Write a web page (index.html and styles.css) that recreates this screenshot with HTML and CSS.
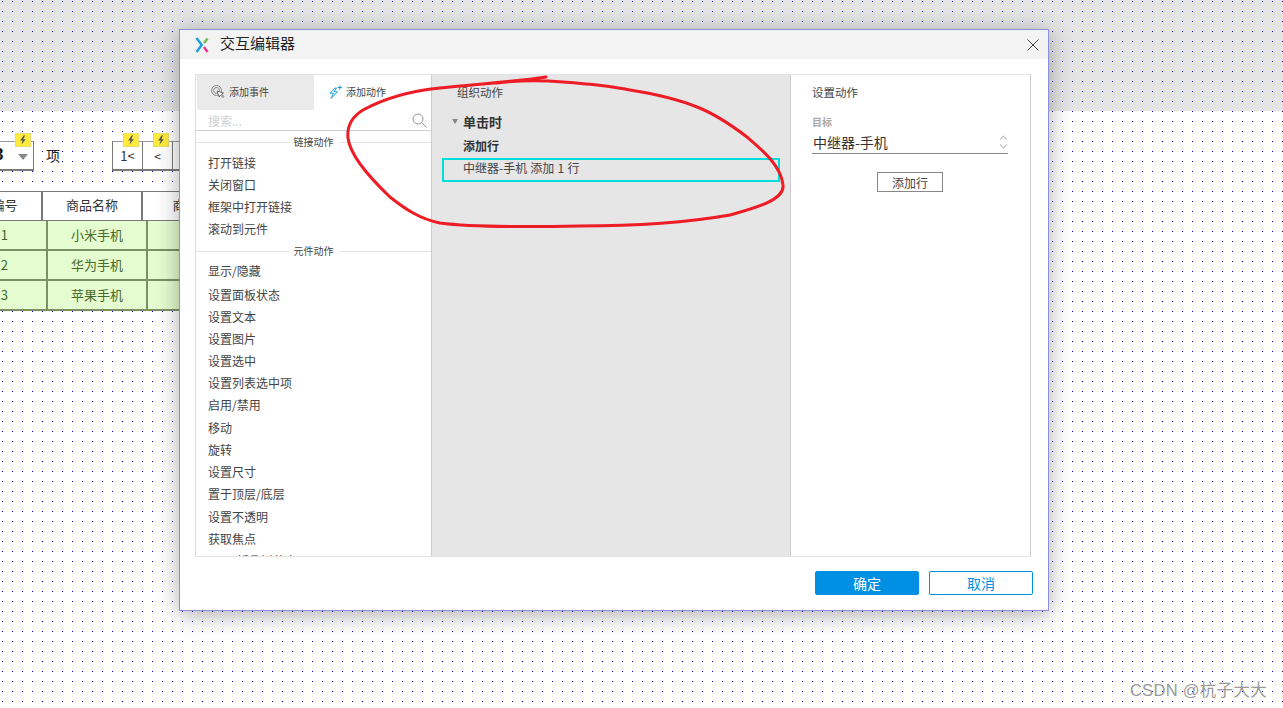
FILE: index.html
```html
<!DOCTYPE html>
<html lang="zh-CN">
<head>
<meta charset="utf-8">
<title>交互编辑器</title>
<link rel="stylesheet" href="styles.css">
</head>
<body>
<main class="canvas">
  <div class="band"></div>

  <div class="widget pager-select"><b class="count">3</b><i class="caret"></i></div>
  <span class="bolt bolt-a"><svg viewBox="0 0 10 12"><path d="M6 0 1.500 6.500h3L3 12l5.500-7h-3L7.500 0z"/></svg></span>
  <span class="widget-label">项</span>
  <div class="widget pager-btn btn-first">1&lt;</div>
  <div class="widget pager-btn btn-prev">&lt;</div>
  <div class="widget pager-btn btn-next"></div>
  <span class="bolt bolt-b"><svg viewBox="0 0 10 12"><path d="M6 0 1.500 6.500h3L3 12l5.500-7h-3L7.500 0z"/></svg></span>
  <span class="bolt bolt-c"><svg viewBox="0 0 10 12"><path d="M6 0 1.500 6.500h3L3 12l5.500-7h-3L7.500 0z"/></svg></span>

  <div class="grid-table">
    <div class="thead">
      <span class="th c-id">编号</span><span class="th c-name">商品名称</span><span class="th c-more">商</span>
    </div>
    <div class="trow"><span class="td d-id">1</span><span class="td d-name">小米手机</span><span class="td d-more"></span></div>
    <div class="trow"><span class="td d-id">2</span><span class="td d-name">华为手机</span><span class="td d-more"></span></div>
    <div class="trow"><span class="td d-id">3</span><span class="td d-name">苹果手机</span><span class="td d-more"></span></div>
  </div>

  <section class="dialog">
    <header class="dialog-head">
      <svg class="logo" viewBox="0 0 14 16" fill="none" stroke-width="2.400">
        <path d="M1.500 1 6.800 8 1.500 15" stroke="#1b9fdc"/>
        <path d="M12.500 1.500 9 6" stroke="#6dbb45"/>
        <path d="M9 10 12.500 15" stroke="#e6358f"/>
      </svg>
      <h1 class="dialog-title">交互编辑器</h1>
      <svg class="close" viewBox="0 0 12 12"><path d="M.5.500l11 11M11.500.500l-11 11" stroke="#444" fill="none"/></svg>
    </header>

    <div class="dialog-body">
      <div class="col col-left">
        <div class="tabs">
          <div class="tab tab-off">
            <svg class="tab-icon" viewBox="0 0 14 14" fill="none" stroke="#888"><circle cx="5.500" cy="5.500" r="5"/><circle cx="5.500" cy="5.500" r="3"/><path d="M6 6l2.200 6 1.300-2 2.500 2.500 1-1-2.500-2.300 2-1.200z" fill="#fff" stroke="#666"/></svg>
            添加事件
          </div>
          <div class="tab">
            <svg class="tab-icon" viewBox="0 0 14 14" fill="none" stroke="#1b9fdc"><path d="M7 3 2 8.200h3.500L3 13.500 9.500 6.800H6L8.500 3z"/><path d="M9.500 2.500h4.500M11.800 .3v4.500"/></svg>
            添加动作
          </div>
        </div>
        <div class="search">
          <span class="search-hint">搜索...</span>
          <svg class="search-icon" viewBox="0 0 15 15" fill="none" stroke="#999"><circle cx="6" cy="6" r="5"/><path d="M9.700 9.700l4.800 4.800"/></svg>
        </div>
        <div class="action-list">
          <div class="group"><span>链接动作</span></div>
          <ul class="items items-link">
            <li>打开链接</li><li>关闭窗口</li><li>框架中打开链接</li><li>滚动到元件</li>
          </ul>
          <div class="group group-second"><span>元件动作</span></div>
          <ul class="items items-widget">
            <li>显示/隐藏</li><li>设置面板状态</li><li>设置文本</li><li>设置图片</li><li>设置选中</li>
            <li>设置列表选中项</li><li>启用/禁用</li><li>移动</li><li>旋转</li><li>设置尺寸</li>
            <li>置于顶层/底层</li><li>设置不透明</li><li>获取焦点</li><li>展开/折叠树节点</li>
          </ul>
        </div>
      </div>

      <div class="col col-mid">
        <h2 class="pane-title">组织动作</h2>
        <div class="event"><i class="event-caret"></i>单击时</div>
        <div class="action-name">添加行</div>
        <div class="action-row">中继器-手机 添加 1 行</div>
      </div>

      <div class="col col-right">
        <h2 class="pane-title">设置动作</h2>
        <div class="field-label">目标</div>
        <div class="field">
          <span>中继器-手机</span>
          <svg class="spinner" viewBox="0 0 9 16" fill="none" stroke="#c4c4c4" stroke-width="1.200"><path d="M1 5.500 4.500 2 8 5.500M1 10.500 4.500 14 8 10.500"/></svg>
        </div>
        <button class="add-row" type="button">添加行</button>
      </div>
    </div>

    <footer class="dialog-foot">
      <button class="btn btn-ok" type="button">确定</button>
      <button class="btn btn-cancel" type="button">取消</button>
    </footer>
  </section>

  <svg class="scribble" viewBox="0 0 1283 708" fill="none">
    <path d="M546 77C515 82 475 84 440 88C410 91 385 98 363 110C350 118 347 128 348 138C350 155 370 178 390 197C405 209 420 219 440 223C470 227 530 227 580 226C640 226 690 222 730 215C755 208 785 200 783 185C781 165 760 148 747 137C730 124 715 114 697 107C675 98 655 94 630 90C610 86 590 84 563 82C540 80 520 80 497 83" stroke="#ee1c25" stroke-width="3" stroke-linecap="round"/>
  </svg>

  <div class="watermark">CSDN @杭子大大</div>
</main>
</body>
</html>
```
FILE: styles.css
```css
* { box-sizing: border-box; }
html, body { margin: 0; height: 100%; overflow: hidden; }
body { font-family: "Noto Sans CJK SC", "Liberation Sans", sans-serif; color: #333; background: #fff; }
ul { list-style: none; margin: 0; padding: 0; }
h1, h2 { margin: 0; font-weight: 400; }

/* Dotted design canvas: one blue pixel every 10px */
.canvas {
  position: relative;
  width: 1283px;
  height: 708px;
  overflow: hidden;
  background-color: #fff;
  background-image: radial-gradient(circle at .5px .5px, #0000e6 .6px, transparent .6px);
  background-size: 10px 10px;
  background-position: 2px 1px;
}
.band {
  position: absolute;
  left: 0; top: 0;
  width: 100%;
  height: 111px;
  background-color: #e4e4e4;
  background-image: radial-gradient(circle at .5px .5px, #0000e6 .6px, transparent .6px);
  background-size: 10px 10px;
  background-position: 2px 1px;
}

/* Pagination widgets on the canvas */
.widget {
  position: absolute;
  background: #fff;
  border: 1px solid #797979;
  border-top-color: #999;
  font-size: 13px;
  color: #333;
  display: flex;
  align-items: center;
  justify-content: center;
}
.pager-select { left: -20px; top: 141px; width: 54px; height: 30px; border-width: 1px 1px 2px 1px; }
.count { position: absolute; left: 13px; top: 3px; font: 700 17px "Liberation Sans", sans-serif; color: #111; }
.caret {
  position: absolute; right: 5px; top: 12px;
  border: 5px solid transparent;
  border-top: 6px solid #888;
  border-bottom: 0;
}
.widget-label { position: absolute; left: 46px; top: 145px; font-size: 14px; line-height: 20px; color: #222; }
.pager-btn { top: 141px; width: 31px; height: 30px; border-width: 1px 1px 2px 1px; }
.btn-first { left: 112px; }
.btn-prev { left: 142px; font-size: 12px; }
.btn-next { left: 172px; }

.bolt {
  position: absolute;
  width: 16px; height: 14px;
  background: #ffeb3b;
  border: 1px solid #e8dc6a;
  display: flex;
  align-items: center;
  justify-content: center;
}
.bolt svg { width: 8px; height: 10px; fill: #555; }
.bolt-a { left: 15px; top: 133px; }
.bolt-b { left: 123px; top: 133px; }
.bolt-c { left: 153px; top: 133px; }

/* Repeater table behind the dialog */
.grid-table { position: absolute; left: -32px; top: 191px; width: 249px; }
.thead { display: flex; height: 30px; background: #fff; border: solid #797979; border-width: 1px 0 1px 0; }
.th {
  display: flex; align-items: center; justify-content: center;
  font-size: 13px; color: #333;
  padding-bottom: 3px;
  border-right: 2px solid #797979;
}
.c-id { width: 75px; }
.c-name { width: 100px; }
.c-more { width: 74px; }
.trow { display: flex; height: 30px; background: #e4fccf; border-bottom: 2px solid #7b9163; }
.td {
  display: flex; align-items: center; justify-content: center;
  font-size: 13px; color: #4a6a2a;
  padding-bottom: 1px;
  border-right: 2px solid #7b9163;
}
.d-id { width: 80px; color: #3f6a2a; padding-right: 38px; justify-content: flex-end; }
.d-name { width: 100px; }
.d-more { flex: 1; }

/* Interaction editor dialog */
.dialog {
  position: absolute;
  left: 179px; top: 29px;
  width: 870px; height: 582px;
  background: #fff;
  border: 1px solid #8f8fd6;
  box-shadow: 0 4px 22px rgba(0, 0, 0, .32);
  display: flex;
  flex-direction: column;
}
.dialog-head {
  height: 29px;
  flex: none;
  background: #f3f3f3;
  display: flex;
  align-items: center;
  padding: 0 9px 0 15px;
}
.logo { width: 14px; height: 16px; flex: none; }
.dialog-title { font-size: 15px; line-height: 20px; margin-left: 11px; padding-bottom: 3px; color: #222; flex: 1; }
.close { width: 12px; height: 12px; flex: none; }

.dialog-body {
  display: flex;
  height: 483px;
  margin: 15px 17px 0 15px;
  border: solid #e3e3e3;
  border-width: 1px 0 1px 0;
  flex: none;
}
.col { height: 100%; overflow: hidden; }
.col-left { width: 237px; border-left: 1px solid #ddd; border-right: 1px solid #ccc; }
.col-mid { width: 359px; background: #e6e6e6; border-right: 1px solid #ccc; padding-left: 10px; }
.col-right { width: 240px; border-right: 1px solid #ccc; padding: 0 22px 0 21px; display: flex; flex-direction: column; }

.tabs { display: flex; height: 35px; padding-left: 1px; }
.tab {
  width: 117px;
  display: flex; align-items: center;
  font-size: 10px; color: #444;
  padding: 0 0 2px 14px;
  gap: 4px;
}
.tab-off { background: #eaeaea; }
.tab-icon { width: 14px; height: 14px; flex: none; }

.search {
  height: 21px;
  padding: 0 4px 0 12px;
  border-bottom: 1px solid #d0d0d0;
  display: flex; align-items: center; justify-content: space-between;
}
.search-hint { font-size: 12px; color: #d0d0d0; }
.search-icon { width: 15px; height: 15px; }

.group {
  height: 0;
  border-top: 1px solid #e3e3e3;
  margin-top: 11px;
  display: flex; justify-content: center;
}
.group span {
  font-size: 10px; line-height: 14px;
  height: 14px; padding: 0 5px;
  background: #fff; color: #444;
  transform: translateY(-8px);
}
.group-second { margin-top: 10px; }
.items { padding: 0 0 0 12px; margin-top: 10px; font-size: 12px; color: #444; }
.items li { height: 22px; line-height: 20px; }
.items-widget { margin-top: 9px; }
/* The widget actions are not evenly spaced in this list */
.items-widget li:nth-child(1) { height: 24px; }
.items-widget li:nth-child(7) { height: 23px; }
.items-widget li:nth-child(11) { height: 23px; }

.pane-title { font-size: 11.500px; line-height: 16px; padding-top: 9px; color: #444; box-sizing: content-box; }
.col-mid .pane-title { padding-left: 15px; }
.event {
  display: flex; align-items: center;
  font-size: 13px; font-weight: 700; color: #333;
  margin-top: 12px; height: 18px; padding-left: 10px;
}
.event-caret {
  border: 3.500px solid transparent;
  border-top: 5px solid #888;
  border-bottom: 0;
  margin-right: 5px;
}
.action-name { font-size: 12px; font-weight: 700; color: #333; margin-top: 7px; height: 18px; line-height: 18px; padding-left: 21px; }
.action-row {
  width: 338px; height: 24px;
  margin-top: 3px;
  border: 2px solid #00dede;
  font-size: 12px; line-height: 16px;
  padding: 0 0 0 19px;
  color: #444;
  word-spacing: .5px;
}

.field-label { font-size: 10px; font-weight: 700; color: #aaa; margin-top: 16px; line-height: 12px; }
.field {
  display: flex; align-items: center; justify-content: space-between;
  font-size: 14px; color: #333;
  height: 24px;
  margin-top: 2px;
  padding-left: 1px;
  border-bottom: 1px solid #888;
}
.spinner { width: 9px; height: 16px; flex: none; }
.add-row {
  align-self: center;
  width: 66px; height: 20px;
  margin-top: 18px;
  background: #fff;
  border: 1px solid #888;
  font: 12px "Noto Sans CJK SC", sans-serif;
  color: #444;
  padding: 0;
}

.dialog-foot {
  flex: 1;
  display: flex; justify-content: flex-end; align-items: flex-start;
  gap: 10px;
  padding: 14px 15px 0 0;
}
.btn {
  width: 104px; height: 24px;
  border-radius: 2px;
  font: 14px "Noto Sans CJK SC", sans-serif;
  padding: 0;
}
.btn-ok { background: #0090e3; border: 1px solid #0090e3; color: #fff; }
.btn-cancel { background: #fff; border: 1px solid #0090e3; color: #0090e3; }

/* Hand-drawn annotation over the dialog */
.scribble { position: absolute; left: 0; top: 0; width: 1283px; height: 708px; pointer-events: none; }

.watermark {
  position: absolute;
  right: 16px; top: 679px;
  font: 16.500px/22px "Liberation Sans", "Noto Sans CJK SC", sans-serif;
  color: #999;
  letter-spacing: .3px;
}
```
